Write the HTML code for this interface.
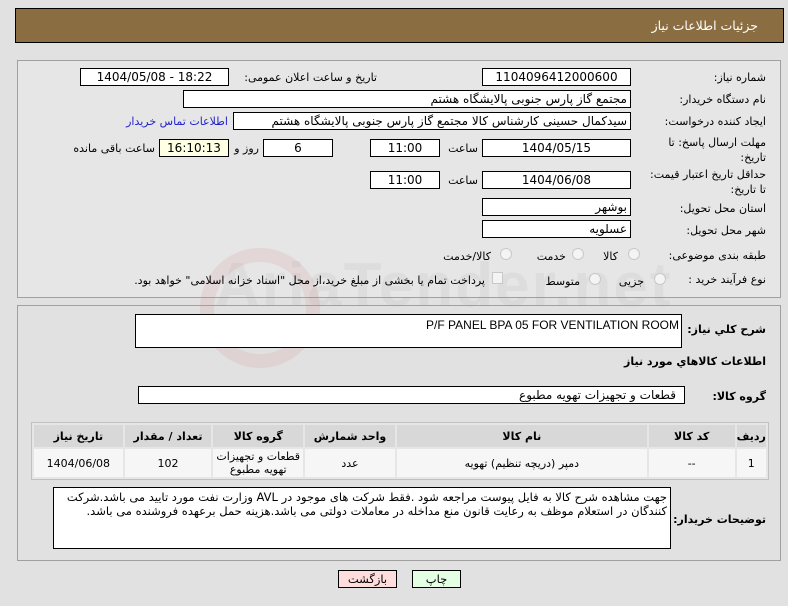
<!DOCTYPE html>
<html><head><meta charset="utf-8">
<style>
*{margin:0;padding:0;box-sizing:border-box}
body{width:788px;height:606px;background:#e1e1e1;font-family:"DejaVu Sans","Liberation Sans",sans-serif;font-size:11px;color:#000;position:relative;overflow:hidden}
.a{position:absolute}
.box{position:absolute;background:#fff;border:1px solid #000;text-align:center;line-height:16px;font-size:12px;white-space:nowrap;overflow:hidden}
.r{text-align:right;padding-right:3px;direction:rtl}
.lbl{position:absolute;direction:rtl;text-align:right;white-space:nowrap;font-size:11px}
.panel{position:absolute;border:1px solid #a0a0a0;background:#e6e6e6}
.rad{position:absolute;width:12px;height:12px;border-radius:50%;border:1px solid #c8c8c8;background:#f4f4f4}
table{border-collapse:separate;border-spacing:2px;position:absolute;background:#e6e6e6;border:1px solid #c0c0c0}
th{background:#d8d8d8;font-weight:bold;height:22px;font-size:11px}
td{background:#f6f6f6;height:28px;text-align:center;font-size:11px}
</style></head><body>
<div class="a" style="left:15px;top:8px;width:769px;height:35px;background:#8b6d42;border:1px solid #000"></div>
<div class="lbl" style="right:30px;top:18px;color:#fff;font-size:12.5px">جزئیات اطلاعات نیاز</div>

<div class="panel" style="left:17px;top:60px;width:764px;height:238px"></div>
<div class="a" style="left:215px;top:250px;font-size:62px;font-weight:bold;color:rgba(150,150,150,.1);font-family:'Liberation Sans';letter-spacing:2px">AriaTender.net</div>
<div class="a" style="left:200px;top:248px;width:120px;height:120px;border:14px solid rgba(210,120,120,.14);border-radius:50%"></div>

<div class="lbl" style="right:22px;top:71px">شماره نیاز:</div>
<div class="box" style="left:482px;top:68px;width:149px;height:18px">1104096412000600</div>
<div class="lbl" style="right:411px;top:71px">تاریخ و ساعت اعلان عمومی:</div>
<div class="box" style="left:80px;top:68px;width:149px;height:18px">1404/05/08 - 18:22</div>

<div class="lbl" style="right:22px;top:93px">نام دستگاه خریدار:</div>
<div class="box r" style="left:183px;top:90px;width:448px;height:18px">مجتمع گاز پارس جنوبی  پالایشگاه هشتم</div>

<div class="lbl" style="right:22px;top:115px">ایجاد کننده درخواست:</div>
<div class="box r" style="left:233px;top:112px;width:398px;height:18px">سیدکمال حسینی کارشناس کالا مجتمع گاز پارس جنوبی  پالایشگاه هشتم</div>
<div class="lbl" style="right:560px;top:115px;color:#2222cc">اطلاعات تماس خریدار</div>

<div class="lbl" style="right:22px;top:136px">مهلت ارسال پاسخ: تا</div>
<div class="lbl" style="right:22px;top:151px">تاریخ:</div>
<div class="box" style="left:482px;top:139px;width:149px;height:18px">1404/05/15</div>
<div class="lbl" style="right:310px;top:142px">ساعت</div>
<div class="box" style="left:370px;top:139px;width:70px;height:18px">11:00</div>
<div class="box" style="left:263px;top:139px;width:70px;height:18px">6</div>
<div class="lbl" style="right:529px;top:142px">روز و</div>
<div class="box" style="left:159px;top:139px;width:70px;height:18px;background:#ffffe4">16:10:13</div>
<div class="lbl" style="right:633px;top:142px">ساعت باقی مانده</div>

<div class="lbl" style="right:22px;top:168px">حداقل تاریخ اعتبار قیمت:</div>
<div class="lbl" style="right:22px;top:183px">تا تاریخ:</div>
<div class="box" style="left:482px;top:171px;width:149px;height:18px">1404/06/08</div>
<div class="lbl" style="right:310px;top:174px">ساعت</div>
<div class="box" style="left:370px;top:171px;width:70px;height:18px">11:00</div>

<div class="lbl" style="right:22px;top:202px">استان محل تحویل:</div>
<div class="box r" style="left:482px;top:198px;width:149px;height:18px">بوشهر</div>
<div class="lbl" style="right:22px;top:224px">شهر محل تحویل:</div>
<div class="box r" style="left:482px;top:220px;width:149px;height:18px">عسلویه</div>

<div class="lbl" style="right:22px;top:249px">طبقه بندی موضوعی:</div>
<div class="rad" style="left:628px;top:248px"></div>
<div class="lbl" style="right:170px;top:250px">کالا</div>
<div class="rad" style="left:572px;top:248px"></div>
<div class="lbl" style="right:222px;top:250px">خدمت</div>
<div class="rad" style="left:500px;top:248px"></div>
<div class="lbl" style="right:297px;top:250px">کالا/خدمت</div>

<div class="lbl" style="right:22px;top:273px">نوع فرآیند خرید :</div>
<div class="rad" style="left:654px;top:273px"></div>
<div class="lbl" style="right:144px;top:275px">جزیی</div>
<div class="rad" style="left:589px;top:273px"></div>
<div class="lbl" style="right:208px;top:275px">متوسط</div>
<div class="a" style="left:492px;top:272px;width:11px;height:12px;border:1px solid #c8c8c8;background:#f4f4f4"></div>
<div class="lbl" style="right:303px;top:274px">پرداخت تمام یا بخشی از مبلغ خرید،از محل "اسناد خزانه اسلامی" خواهد بود.</div>

<div class="panel" style="left:17px;top:305px;width:764px;height:256px;background:transparent"></div>
<div class="lbl" style="right:22px;top:323px;font-weight:bold">شرح کلي نياز:</div>
<div class="box" style="left:135px;top:314px;width:547px;height:34px;text-align:right;padding-right:2px;font-family:'Liberation Sans';font-size:12px;line-height:20px">P/F PANEL BPA 05 FOR VENTILATION ROOM</div>
<div class="lbl" style="right:22px;top:355px;font-weight:bold">اطلاعات کالاهاي مورد نياز</div>
<div class="lbl" style="right:22px;top:390px;font-weight:bold">گروه کالا:</div>
<div class="box r" style="left:138px;top:386px;width:547px;height:18px;padding-right:8px">قطعات و تجهیزات تهویه مطبوع</div>

<table style="left:31px;top:422px;width:738px">
<tr><th style="width:88px">تاریخ نیاز</th><th style="width:86px">تعداد / مقدار</th><th style="width:89px">گروه کالا</th><th style="width:89px">واحد شمارش</th><th style="width:248px">نام کالا</th><th style="width:85px">کد کالا</th><th style="width:26px">ردیف</th></tr>
<tr><td>1404/06/08</td><td>102</td><td style="line-height:13px">قطعات و تجهیزات<br>تهویه مطبوع</td><td>عدد</td><td>دمپر (دریچه تنظیم) تهویه</td><td>--</td><td>1</td></tr>
</table>

<div class="lbl" style="right:22px;top:513px;font-weight:bold">توضیحات خریدار:</div>
<div class="box" style="left:53px;top:487px;width:618px;height:62px;white-space:normal;text-align:right;direction:rtl;padding:2px 3px;line-height:14px;font-size:11.5px">جهت مشاهده شرح کالا به فایل پیوست مراجعه شود .فقط شرکت های موجود در AVL وزارت نفت مورد تایید می باشد.شرکت کنندگان در استعلام موظف به رعایت قانون منع مداخله در معاملات دولتی می باشد.هزینه حمل برعهده فروشنده می باشد.</div>

<div class="box" style="left:338px;top:570px;width:59px;height:18px;background:#fdd;font-size:11.5px">بازگشت</div>
<div class="box" style="left:412px;top:570px;width:49px;height:18px;background:#e4ffe4;font-size:11.5px">چاپ</div>
</body></html>
